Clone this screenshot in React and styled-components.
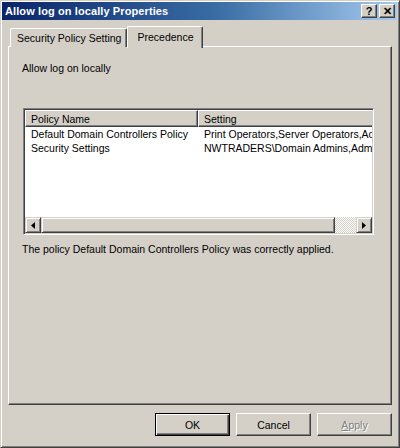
import React from "react"
import styled, { createGlobalStyle } from "styled-components"

const GlobalStyle = createGlobalStyle`
  html, body {
    margin: 0;
    padding: 0;
    background: #d4d0c8;
  }
  body {
    font-family: "Liberation Sans", Arial, sans-serif;
    font-size: 10.5px;
    color: #000;
  }
`

const Window = styled.div`
  width: 400px;
  height: 448px;
  box-sizing: border-box;
  background: #d4d0c8;
  border: 1px solid;
  border-color: #d4d0c8 #404040 #404040 #d4d0c8;
  box-shadow: inset 1px 1px 0 #fff, inset -1px -1px 0 #808080;
  padding: 1px 2px 2px 1px;
  display: flex;
  flex-direction: column;
`

const TitleBar = styled.div`
  height: 18px;
  flex: none;
  display: flex;
  align-items: center;
  padding: 0 2px 0 3px;
  background: linear-gradient(to right, #0a246a, #3a6ea5 55%, #a6caf0);
`

const Title = styled.div`
  flex: 1;
  color: #fff;
  font-weight: bold;
  font-size: 11px;
  letter-spacing: 0.1px;
`

const CaptionButton = styled.div`
  width: 16px;
  height: 14px;
  box-sizing: border-box;
  margin-left: ${(p) => (p.$gap ? "2px" : "0")};
  background: #d4d0c8;
  border: 1px solid;
  border-color: #fff #404040 #404040 #fff;
  box-shadow: inset -1px -1px 0 #808080;
  display: flex;
  align-items: center;
  justify-content: center;
  font-weight: bold;
  font-size: 11px;
  line-height: 1;
`

const Body = styled.div`
  flex: 1;
  display: flex;
  flex-direction: column;
  padding: 6px 5px 0 6px;
`

const TabStrip = styled.div`
  display: flex;
  align-items: flex-end;
  padding-left: 2px;
  height: 21px;
  margin-bottom: -1px;
`

const Tab = styled.div`
  box-sizing: border-box;
  height: ${(p) => (p.$active ? "22px" : "19px")};
  padding: ${(p) => (p.$active ? "4px 8px 0 9px" : "3px 5px 0 6px")};
  background: #d4d0c8;
  border: 1px solid;
  border-color: #fff #404040 transparent #fff;
  border-bottom: none;
  border-radius: 2px 2px 0 0;
  box-shadow: inset -1px 0 0 #808080;
  position: relative;
  z-index: ${(p) => (p.$active ? 2 : 1)};
  margin-bottom: ${(p) => (p.$active ? "-1px" : "0")};
  white-space: nowrap;
`

const Panel = styled.div`
  flex: 1;
  display: flex;
  flex-direction: column;
  border: 1px solid;
  border-color: #fff #404040 #404040 #fff;
  box-shadow: inset -1px -1px 0 #808080;
  padding: 15px 0 0 14px;
`

const Label = styled.div`
  margin-left: -1px;
`

const ListBox = styled.div`
  width: 351px;
  height: 127px;
  box-sizing: border-box;
  margin-top: 34px;
  background: #fff;
  border: 1px solid;
  border-color: #808080 #fff #fff #808080;
  box-shadow: inset 1px 1px 0 #404040, inset -1px -1px 0 #d4d0c8;
  padding: 1px;
  display: flex;
  flex-direction: column;
`

const Viewport = styled.div`
  flex: 1;
  overflow: hidden;
`

const HeaderRow = styled.div`
  display: flex;
  width: 600px;
`

const HeaderCell = styled.div`
  width: ${(p) => p.$w}px;
  height: 17px;
  box-sizing: border-box;
  flex: none;
  background: #d4d0c8;
  border: 1px solid;
  border-color: #fff #404040 #404040 #fff;
  box-shadow: inset -1px -1px 0 #808080;
  padding: 2px 0 0 5px;
  white-space: nowrap;
`

const Row = styled.div`
  display: flex;
  width: 600px;
  height: 14px;
  line-height: 14px;
  &:first-of-type {
    margin-top: 1px;
  }
`

const Cell = styled.div`
  width: ${(p) => p.$w}px;
  flex: none;
  padding-left: 6px;
  box-sizing: border-box;
  white-space: nowrap;
  overflow: hidden;
`

const ScrollBar = styled.div`
  height: 16px;
  flex: none;
  display: flex;
  background: repeating-conic-gradient(#fff 0 25%, #d4d0c8 0 50%) 0 0 / 2px 2px;
`

const ScrollButton = styled.div`
  width: 16px;
  height: 16px;
  box-sizing: border-box;
  flex: none;
  background: #d4d0c8;
  border: 1px solid;
  border-color: #d4d0c8 #404040 #404040 #d4d0c8;
  box-shadow: inset 1px 1px 0 #fff, inset -1px -1px 0 #808080;
  display: flex;
  align-items: center;
  justify-content: center;
`

const Thumb = styled(ScrollButton)`
  width: 294px;
`

const Track = styled.div`
  flex: 1;
`

const Note = styled.div`
  margin-top: 8px;
  margin-left: -1px;
`

const ButtonRow = styled.div`
  display: flex;
  justify-content: flex-end;
  gap: 6px;
  padding: 8px 0 0;
`

const Button = styled.button`
  width: 75px;
  height: 23px;
  box-sizing: border-box;
  font-family: "Liberation Sans", Arial, sans-serif;
  font-size: 10.5px;
  background: #d4d0c8;
  padding: 0;
  border: 1px solid;
  border-color: ${(p) =>
    p.$default ? "#000" : "#fff #404040 #404040 #fff"};
  box-shadow: ${(p) =>
    p.$default
      ? "inset 1px 1px 0 #fff, inset -1px -1px 0 #404040, inset -2px -2px 0 #808080"
      : "inset -1px -1px 0 #808080"};
  color: ${(p) => (p.disabled ? "#808080" : "#000")};
  text-shadow: ${(p) => (p.disabled ? "1px 1px 0 #fff" : "none")};
`

const Spacer = styled.div`
  height: 9px;
  flex: none;
`

function Arrow({ dir }) {
  return (
    <svg width="4" height="7" viewBox="0 0 4 7">
      {dir === "left" ? (
        <path d="M4 0 L0 3.5 L4 7 Z" fill="#000" />
      ) : (
        <path d="M0 0 L4 3.5 L0 7 Z" fill="#000" />
      )}
    </svg>
  )
}

const rows = [
  ["Default Domain Controllers Policy", "Print Operators,Server Operators,Account Operators,Administrators"],
  ["Security Settings", "NWTRADERS\\Domain Admins,Administrators"],
]

export default function App() {
  return (
    <>
      <GlobalStyle />
      <Window>
        <TitleBar>
          <Title>Allow log on locally Properties</Title>
          <CaptionButton>?</CaptionButton>
          <CaptionButton $gap>✕</CaptionButton>
        </TitleBar>
        <Body>
          <TabStrip>
            <Tab>Security Policy Setting</Tab>
            <Tab $active>Precedence</Tab>
          </TabStrip>
          <Panel>
            <Label>Allow log on locally</Label>
            <ListBox>
              <Viewport>
                <HeaderRow>
                  <HeaderCell $w={173}>Policy Name</HeaderCell>
                  <HeaderCell $w={300}>Setting</HeaderCell>
                </HeaderRow>
                {rows.map(([name, setting]) => (
                  <Row key={name}>
                    <Cell $w={173}>{name}</Cell>
                    <Cell $w={300}>{setting}</Cell>
                  </Row>
                ))}
              </Viewport>
              <ScrollBar>
                <ScrollButton>
                  <Arrow dir="left" />
                </ScrollButton>
                <Thumb />
                <Track />
                <ScrollButton>
                  <Arrow dir="right" />
                </ScrollButton>
              </ScrollBar>
            </ListBox>
            <Note>The policy Default Domain Controllers Policy was correctly applied.</Note>
          </Panel>
          <ButtonRow>
            <Button $default>OK</Button>
            <Button>Cancel</Button>
            <Button disabled>
              <u>A</u>pply
            </Button>
          </ButtonRow>
          <Spacer />
        </Body>
      </Window>
    </>
  )
}
